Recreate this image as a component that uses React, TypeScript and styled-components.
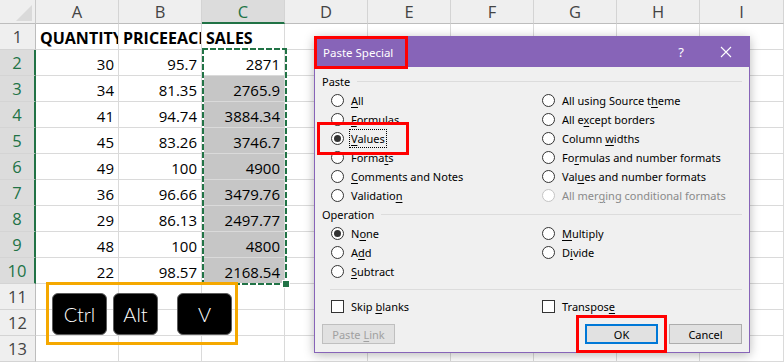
import React from "react";
import styled, { createGlobalStyle } from "styled-components";

const GREEN = "#217346";

const GlobalStyle = createGlobalStyle`
  html, body {
    margin: 0;
    padding: 0;
    background: #ffffff;
  }
`;

const Screen = styled.div`
  position: relative;
  width: 784px;
  height: 362px;
  overflow: hidden;
  background: #ffffff;
`;

/* ---------- spreadsheet ---------- */

const Sheet = styled.div`
  display: grid;
  grid-template-columns: 36px repeat(8, 83px) 84px;
  grid-template-rows: 24px repeat(13, 26px);
  font-family: "Open Sans", "Liberation Sans", sans-serif;
`;

const Corner = styled.div`
  box-sizing: border-box;
  background: #efefef;
  border-right: 1px solid #c9c9c9;
  border-bottom: 1px solid #bdbdbd;
  display: flex;
  align-items: flex-end;
  justify-content: flex-end;
  padding: 0 3px 2px 0;
  &::after {
    content: "";
    border-left: 16px solid transparent;
    border-bottom: 16px solid #dadada;
  }
`;

const ColHead = styled.div<{ $active?: boolean }>`
  box-sizing: border-box;
  display: flex;
  align-items: center;
  justify-content: center;
  background: ${(p) => (p.$active ? "#dcdcdc" : "#efefef")};
  color: ${(p) => (p.$active ? GREEN : "#444444")};
  border-right: 1px solid #d4d4d4;
  border-bottom: ${(p) => (p.$active ? `2px solid ${GREEN}` : "1px solid #bdbdbd")};
  font-size: 16.5px;
`;

const RowHead = styled.div<{ $active?: boolean }>`
  box-sizing: border-box;
  display: flex;
  align-items: center;
  justify-content: center;
  background: ${(p) => (p.$active ? "#dcdcdc" : "#efefef")};
  color: ${(p) => (p.$active ? GREEN : "#444444")};
  border-right: ${(p) => (p.$active ? `2px solid ${GREEN}` : "1px solid #bdbdbd")};
  border-bottom: 1px solid #d4d4d4;
  font-size: 16.5px;
`;

const Cell = styled.div<{ $sel?: boolean; $bold?: boolean; $num?: boolean }>`
  box-sizing: border-box;
  display: flex;
  align-items: flex-end;
  justify-content: ${(p) => (p.$num ? "flex-end" : "flex-start")};
  padding: 0 4px 1px 4px;
  background: ${(p) => (p.$sel ? "#c6c6c6" : "#ffffff")};
  border-right: 1px solid #dadada;
  border-bottom: 1px solid #dadada;
  font-size: ${(p) => (p.$bold ? "16px" : "15px")};
  line-height: 20px;
  font-weight: ${(p) => (p.$bold ? 700 : 400)};
  color: #000000;
  white-space: nowrap;
  overflow: hidden;
`;

const Marquee = styled.div`
  position: absolute;
  left: 202px;
  top: 48px;
  width: 85px;
  height: 237px;
  box-sizing: border-box;
  background:
    repeating-linear-gradient(90deg, ${GREEN} 0 6px, #ffffff 6px 8px) top / 100% 2px no-repeat,
    repeating-linear-gradient(90deg, ${GREEN} 0 6px, #ffffff 6px 8px) bottom / 100% 2px no-repeat,
    repeating-linear-gradient(180deg, ${GREEN} 0 6px, #ffffff 6px 8px) left / 2px 100% no-repeat,
    repeating-linear-gradient(180deg, ${GREEN} 0 6px, #ffffff 6px 8px) right / 2px 100% no-repeat;
`;

const FillHandle = styled.div`
  position: absolute;
  right: -3px;
  bottom: -3px;
  width: 6px;
  height: 6px;
  background: ${GREEN};
  border: 1px solid #ffffff;
`;

/* ---------- keyboard shortcut callout ---------- */

const KeyCallout = styled.div`
  position: absolute;
  left: 46px;
  top: 282px;
  width: 192px;
  height: 63px;
  box-sizing: border-box;
  border: 3px solid #f5a800;
  display: flex;
  align-items: center;
`;

const Key = styled.div<{ $w: number; $ml: number }>`
  box-sizing: border-box;
  width: ${(p) => p.$w}px;
  height: 42px;
  margin-left: ${(p) => p.$ml}px;
  background: #000000;
  border: 1.5px solid #5c5c5c;
  border-radius: 6px;
  display: flex;
  align-items: center;
  justify-content: center;
  color: #ffffff;
  font-family: "Lato", "DejaVu Sans", sans-serif;
  font-weight: 300;
  font-size: 20px;
`;

/* ---------- paste special dialog ---------- */

const Dialog = styled.div`
  position: absolute;
  left: 314px;
  top: 36px;
  width: 436px;
  height: 317px;
  box-sizing: border-box;
  border: 1px solid #8764b8;
  background: #f0f0f0;
  box-shadow: 0 2px 10px rgba(0, 0, 0, 0.28);
  display: flex;
  flex-direction: column;
  font-family: "Noto Sans", "Liberation Sans", sans-serif;
  font-size: 11px;
  color: #000000;
`;

const TitleBar = styled.div`
  height: 30px;
  flex: none;
  background: #8764b8;
  color: #ffffff;
  display: flex;
  align-items: center;
  padding-left: 8px;
  font-size: 11.5px;
`;

const TitleText = styled.div`
  flex: 1;
`;

const TitleButton = styled.div<{ $w: number }>`
  width: ${(p) => p.$w}px;
  height: 30px;
  display: flex;
  align-items: center;
  justify-content: center;
  font-size: 13px;
`;

const Body = styled.div`
  flex: 1;
  display: flex;
  flex-direction: column;
  padding: 5px 7px 8px 7px;
`;

const GroupHeader = styled.div`
  height: 18px;
  display: flex;
  align-items: center;
  gap: 7px;
  &::after {
    content: "";
    flex: 1;
    height: 1px;
    background: #dcdcdc;
  }
`;

const OptionGrid = styled.div<{ $rows: number }>`
  display: grid;
  grid-template-columns: 211px 1fr;
  grid-template-rows: repeat(${(p) => p.$rows}, 19px);
  grid-auto-flow: column;
  margin-top: 1px;
  padding-left: 9px;
`;

const Option = styled.div<{ $disabled?: boolean }>`
  display: flex;
  align-items: center;
  gap: 7px;
  color: ${(p) => (p.$disabled ? "#8a8a8a" : "#000000")};
`;

const Radio = styled.span<{ $checked?: boolean; $disabled?: boolean }>`
  box-sizing: border-box;
  width: 13px;
  height: 13px;
  border-radius: 50%;
  border: 1px solid ${(p) => (p.$disabled ? "#c4c4c4" : "#333333")};
  background: #ffffff;
  display: flex;
  align-items: center;
  justify-content: center;
  &::after {
    content: "";
    width: 7px;
    height: 7px;
    border-radius: 50%;
    background: ${(p) => (p.$checked ? "#333333" : "transparent")};
  }
`;

const Check = styled.span`
  box-sizing: border-box;
  width: 13px;
  height: 13px;
  border: 1px solid #333333;
  background: #ffffff;
`;

const Label = styled.span<{ $focus?: boolean }>`
  outline: ${(p) => (p.$focus ? "1px dotted #000000" : "none")};
  outline-offset: 1px;
  white-space: pre;
`;

const AccessKey = styled.span`
  text-decoration: underline;
  text-underline-offset: 2px;
`;

const Divider = styled.div`
  height: 1px;
  background: #dcdcdc;
  margin: 8px 0 7px 8px;
`;

const CheckRow = styled.div`
  display: grid;
  grid-template-columns: 211px 1fr;
  height: 19px;
  padding-left: 9px;
`;

const ButtonRow = styled.div`
  display: flex;
  gap: 11px;
  margin-top: 8px;
`;

const Spacer = styled.div`
  flex: 1;
`;

const Button = styled.div<{ $primary?: boolean; $disabled?: boolean; $flag?: boolean }>`
  box-sizing: border-box;
  width: 73px;
  height: 20px;
  display: flex;
  align-items: center;
  justify-content: center;
  background: #e1e1e1;
  border: ${(p) => (p.$primary ? "2px solid #0078d7" : p.$disabled ? "1px solid #bfbfbf" : "1px solid #adadad")};
  color: ${(p) => (p.$disabled ? "#a0a0a0" : "#000000")};
  outline: ${(p) => (p.$flag ? "3px solid #ff0000" : "none")};
  outline-offset: 6px;
`;

const Marker = styled.div<{ $x: number; $y: number; $w: number; $h: number }>`
  position: absolute;
  left: ${(p) => p.$x}px;
  top: ${(p) => p.$y}px;
  width: ${(p) => p.$w}px;
  height: ${(p) => p.$h}px;
  box-sizing: border-box;
  border: 3px solid #ff0000;
`;

/* ---------- data ---------- */

const columns = ["A", "B", "C", "D", "E", "F", "G", "H", "I"];

const rows: string[][] = [
  ["QUANTITY", "PRICEEACH", "SALES"],
  ["30", "95.7", "2871"],
  ["34", "81.35", "2765.9"],
  ["41", "94.74", "3884.34"],
  ["45", "83.26", "3746.7"],
  ["49", "100", "4900"],
  ["36", "96.66", "3479.76"],
  ["29", "86.13", "2497.77"],
  ["48", "100", "4800"],
  ["22", "98.57", "2168.54"],
  [],
  [],
  [],
];

type Opt = { label: string; checked?: boolean; disabled?: boolean; focus?: boolean };

const pasteOptions: Opt[] = [
  { label: "&All" },
  { label: "&Formulas" },
  { label: "&Values", checked: true, focus: true },
  { label: "Forma&ts" },
  { label: "&Comments and Notes" },
  { label: "Validatio&n" },
  { label: "All using Source t&heme" },
  { label: "All e&xcept borders" },
  { label: "Column &widths" },
  { label: "Fo&rmulas and number formats" },
  { label: "Val&ues and number formats" },
  { label: "All mer&ging conditional formats", disabled: true },
];

const operationOptions: Opt[] = [
  { label: "N&one", checked: true },
  { label: "A&dd" },
  { label: "&Subtract" },
  { label: "&Multiply" },
  { label: "D&ivide" },
];

// "&" marks the underlined access key, like a Windows resource string
function Mnemonic({ text }: { text: string }) {
  const i = text.indexOf("&");
  if (i < 0) return <>{text}</>;
  return (
    <>
      {text.slice(0, i)}
      <AccessKey>{text[i + 1]}</AccessKey>
      {text.slice(i + 2)}
    </>
  );
}

function OptionList({ items, rows: count }: { items: Opt[]; rows: number }) {
  return (
    <OptionGrid $rows={count}>
      {items.map((o) => (
        <Option key={o.label} $disabled={o.disabled}>
          <Radio $checked={o.checked} $disabled={o.disabled} />
          <Label $focus={o.focus}>
            <Mnemonic text={o.label} />
          </Label>
        </Option>
      ))}
    </OptionGrid>
  );
}

export default function App() {
  return (
    <Screen>
      <GlobalStyle />
      <Sheet>
        <Corner />
        {columns.map((c) => (
          <ColHead key={c} $active={c === "C"}>
            {c}
          </ColHead>
        ))}
        {rows.map((r, ri) => {
          const n = ri + 1;
          const inRange = n >= 2 && n <= 10;
          return (
            <React.Fragment key={n}>
              <RowHead $active={inRange}>{n}</RowHead>
              {columns.map((c, ci) => (
                <Cell
                  key={c}
                  $bold={n === 1}
                  $num={n > 1}
                  $sel={ci === 2 && n >= 3 && n <= 10}
                >
                  {r[ci] ?? ""}
                </Cell>
              ))}
            </React.Fragment>
          );
        })}
      </Sheet>

      <Marquee>
        <FillHandle />
      </Marquee>

      <KeyCallout>
        <Key $w={55} $ml={3}>Ctrl</Key>
        <Key $w={45} $ml={6}>Alt</Key>
        <Key $w={55} $ml={19}>V</Key>
      </KeyCallout>

      <Dialog>
        <TitleBar>
          <TitleText>Paste Special</TitleText>
          <TitleButton $w={44}>?</TitleButton>
          <TitleButton $w={46}>
            <svg width="12" height="12" viewBox="0 0 12 12">
              <path d="M1 1 L11 11 M11 1 L1 11" stroke="#ffffff" strokeWidth="1.1" />
            </svg>
          </TitleButton>
        </TitleBar>
        <Body>
          <GroupHeader>Paste</GroupHeader>
          <OptionList items={pasteOptions} rows={6} />
          <GroupHeader>Operation</GroupHeader>
          <OptionList items={operationOptions} rows={3} />
          <Divider />
          <CheckRow>
            <Option>
              <Check />
              <Label>
                <Mnemonic text="Skip &blanks" />
              </Label>
            </Option>
            <Option>
              <Check />
              <Label>
                <Mnemonic text="Transpos&e" />
              </Label>
            </Option>
          </CheckRow>
          <ButtonRow>
            <Button $disabled>
              <Label>
                <Mnemonic text="Paste &Link" />
              </Label>
            </Button>
            <Spacer />
            <Button $primary $flag>
              OK
            </Button>
            <Button>Cancel</Button>
          </ButtonRow>
        </Body>
      </Dialog>

      <Marker $x={314} $y={36} $w={94} $h={33} />
      <Marker $x={317} $y={122} $w={92} $h={33} />
    </Screen>
  );
}
